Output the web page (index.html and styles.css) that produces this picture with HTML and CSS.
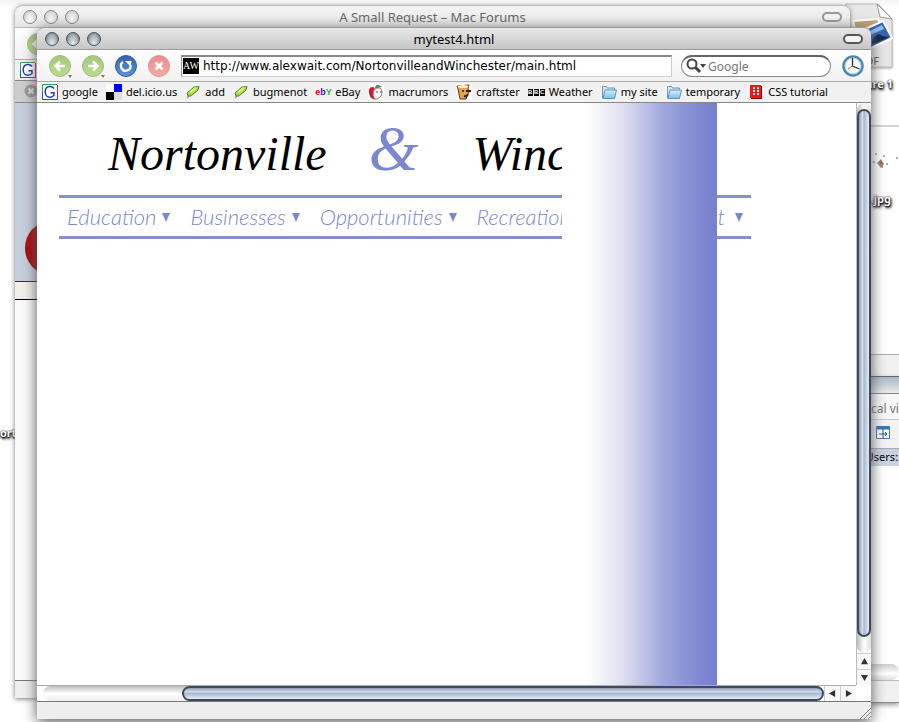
FILE: index.html
```html
<!DOCTYPE html>
<html lang="en">
<head>
    <meta charset="utf-8">
    <title>mytest4.html</title>
    <link rel="stylesheet" href="styles.css">
</head>
<body>
    <!-- shared icon shapes -->
    <svg class="defs" aria-hidden="true">
        <defs>
            <linearGradient id="green" x1="0" y1="0" x2="0" y2="1">
                <stop offset="0" stop-color="#a5c87f"/><stop offset="1" stop-color="#bddc8c"/>
            </linearGradient>
            <linearGradient id="blue" x1="0" y1="0" x2="0" y2="1">
                <stop offset="0" stop-color="#3462ac"/><stop offset="1" stop-color="#5d93e0"/>
            </linearGradient>
            <linearGradient id="red" x1="0" y1="0" x2="0" y2="1">
                <stop offset="0" stop-color="#e88d8d"/><stop offset="1" stop-color="#f6aaa4"/>
            </linearGradient>
            <linearGradient id="sky" x1="0" y1="0" x2="0" y2="1">
                <stop offset="0" stop-color="#d8efff"/><stop offset="1" stop-color="#7dbbe9"/>
            </linearGradient>
        </defs>
        <symbol id="arrow" viewBox="0 0 22 22">
            <circle cx="11" cy="11" r="10.5" fill="url(#green)" stroke="#9dbd78"/>
            <path d="M16 11H7M11 6.500L6.500 11l4.500 4.500" fill="none" stroke="#fff" stroke-width="2.500"/>
        </symbol>
        <symbol id="google" viewBox="0 0 16 16">
            <path d="M0 0h16v16H0z" fill="#fff"/>
            <path d="M.5 15V.5H15" fill="none" stroke="#2f9d46"/>
            <path d="M15.500 1v15" stroke="#d22"/>
            <path d="M0 15.500h15M.5 8v8" fill="none" stroke="#2a50c8"/>
            <path d="M12 4.500C10.500 2.500 8.500 2.300 7 2.600 4.500 3 3.200 5.500 3.200 8c0 3 1.800 5.300 4.600 5.300 1.800 0 3-.8 4.200-1.800V8.700H8.500" fill="none" stroke="#1b3fae" stroke-width="1.500"/>
        </symbol>
        <symbol id="marker" viewBox="0 0 16 16">
            <path d="M2 9l7-6 5-.5L13 6l-7 6H3z" fill="#a4dc45" stroke="#5b8428"/>
            <path d="M5 8.500l6-5" stroke="#d8f47e" stroke-width="2"/>
            <path d="M3 10l2 2-3 3z" fill="#78903a"/>
        </symbol>
        <symbol id="folder" viewBox="0 0 16 16">
            <path d="M1.500 14V2.500h4l1 1.500h7V14z" fill="#d5e5f2" stroke="#7095b3"/>
            <path d="M2 14.500L4 6h11.500l-2 8.500z" fill="url(#sky)" stroke="#5c92bd"/>
        </symbol>
    </svg>

    <main class="desktop">
        <!-- files on the desktop -->
        <div class="file file-pdf">
            <svg width="48" height="66" viewBox="0 0 48 66">
                <path d="M1 1h32l14 15v48H1z" fill="#e6e6e6" stroke="#bbb"/>
                <path d="M32 1l15 15-12-2z" fill="#fafafa" stroke="#999"/>
                <path d="M8 18l25-2 8 18-28 6z" fill="#c3a178" stroke="#fff" stroke-width="2"/>
                <path d="M18 27l20-9 9 17-23 11z" fill="#3865b4" stroke="#fff" stroke-width="2"/>
                <path d="M27 37q6-9 10-4l7 1-17 8z" fill="#192a46"/>
                <path d="M23 29l14-7 2 4-14 6z" fill="#8cbaf3"/>
            </svg>
            <span class="kind">PDF</span>
            <span class="label">Picture 1</span>
        </div>
        <div class="file file-jpg">
            <svg width="30" height="62" viewBox="0 0 30 62">
                <path d="M2 1h28" stroke="#aaa"/>
                <g fill="#98948c">
                    <circle cx="7" cy="29" r="1"/><circle cx="15" cy="31" r="1"/><circle cx="5" cy="37" r="1"/>
                    <circle cx="18" cy="39" r="1"/><circle cx="13" cy="42" r="1"/><circle cx="28" cy="33" r="1"/>
                </g>
                <path d="M8 38l4-4 3 5-3 4z" fill="#8f8b6d"/><path d="M11 36l2 2-2 2z" fill="#c35b1a"/>
            </svg>
            <span class="label">.jpg</span>
        </div>
        <span class="label label-left">ort</span>

        <section class="sliver sliver-top"></section>
        <section class="sliver sliver-finder">
            <div class="finder-title"></div>
            <div class="finder-head">cal vi</div>
            <div class="finder-tools">
                <svg width="14" height="13" viewBox="0 0 14 13">
                    <path d="M.5.5h13v12H.5z" fill="#fff" stroke="#4478b5"/><path d="M1 2h12" stroke="#3472c4" stroke-width="3"/>
                    <path d="M7 3v9M3 8h8M9 6l2 2-2 2" fill="none" stroke="#275b79"/>
                </svg>
            </div>
            <div class="finder-path">Users:</div>
            <div class="finder-body"></div>
            <div class="finder-scroll"></div>
            <div class="finder-status"></div>
        </section>

        <!-- window at the back -->
        <section class="window window-back">
            <header class="titlebar">
                <span class="lights"><i></i><i></i><i></i></span>
                <h2>A Small Request – Mac Forums</h2>
                <i class="pill"></i>
            </header>
            <div class="toolbar"><svg class="round"><use href="#arrow"/></svg></div>
            <div class="bookmarks"><svg class="icon"><use href="#google"/></svg></div>
            <div class="tabs">
                <svg width="14" height="14" viewBox="0 0 14 14"><circle cx="7" cy="7" r="6.500" fill="#999"/><path d="M4.500 4.500l5 5m0-5l-5 5" stroke="#ddd" stroke-width="2"/></svg>
            </div>
            <div class="forum-banner">
                <svg width="60" height="60" viewBox="0 0 60 60"><ellipse cx="24" cy="26" rx="24" ry="26" fill="#a30f12"/></svg>
            </div>
            <div class="forum-strip"></div>
            <div class="forum-body"></div>
            <footer class="status"></footer>
        </section>

        <!-- front browser window -->
        <section class="window window-front">
            <header class="titlebar">
                <span class="lights"><i></i><i></i><i></i></span>
                <h1>mytest4.html</h1>
                <i class="pill"></i>
            </header>

            <form class="toolbar">
                <button type="button" class="tool more" aria-label="Back"><svg class="round"><use href="#arrow"/></svg></button>
                <button type="button" class="tool more forward" aria-label="Forward"><svg class="round"><use href="#arrow"/></svg></button>
                <button type="button" class="tool" aria-label="Reload">
                    <svg class="round" viewBox="0 0 22 22">
                        <circle cx="11" cy="11" r="10.500" fill="url(#blue)" stroke="#345d9f"/>
                        <path d="M8 7a4.800 4.800 0 1 0 7.500 3" fill="none" stroke="#fff" stroke-width="2.300"/>
                        <path d="M10 6h6.500l-1 5.500z" fill="#fff"/>
                    </svg>
                </button>
                <button type="button" class="tool" aria-label="Stop">
                    <svg class="round" viewBox="0 0 22 22">
                        <circle cx="11" cy="11" r="10.500" fill="url(#red)" stroke="#e29594"/>
                        <path d="M7.500 7.500l7 7m0-7l-7 7" stroke="#fff" stroke-width="2.800"/>
                    </svg>
                </button>
                <label class="address">
                    <span class="favicon">AW</span>
                    <input type="text" aria-label="Address" value="http://www.alexwait.com/NortonvilleandWinchester/main.html">
                </label>
                <label class="search">
                    <svg width="20" height="16" viewBox="0 0 20 16">
                        <circle cx="6" cy="6" r="4.500" fill="none" stroke="#444" stroke-width="2"/>
                        <path d="M9 9l5 5" stroke="#444" stroke-width="3"/><path d="M14 6h6l-3 4z" fill="#444"/>
                    </svg>
                    <input type="text" aria-label="Search" placeholder="Google">
                </label>
                <button type="button" class="tool" aria-label="History">
                    <svg class="round" viewBox="0 0 22 22">
                        <circle cx="11" cy="11" r="9.500" fill="#f5f9fd" stroke="#4d87b5" stroke-width="2.500"/>
                        <circle cx="11" cy="11" r="8" fill="none" stroke="#a9cbe5"/>
                        <path d="M10.500 3v8l7 3" fill="none" stroke="#333" stroke-width="1.300"/><path d="M10.500 11L6 14" stroke="#c66"/>
                    </svg>
                </button>
            </form>

            <nav class="bookmarks">
                <a href="#"><svg class="icon"><use href="#google"/></svg>google</a>
                <a href="#"><svg class="icon" viewBox="0 0 16 16"><path d="M0 0h8v8H0z" fill="#fff"/><path d="M8 0h8v8H8z" fill="#00f"/><path d="M0 8h8v8H0z"/><path d="M8 8h8v8H8z" fill="#ddd"/></svg>del.icio.us</a>
                <a href="#"><svg class="icon"><use href="#marker"/></svg>add</a>
                <a href="#"><svg class="icon"><use href="#marker"/></svg>bugmenot</a>
                <a href="#"><span class="ebay"><b>e</b><b>b</b><b>Y</b></span>eBay</a>
                <a href="#">
                    <svg class="icon" viewBox="0 0 16 16">
                        <path d="M0 0h16v16H0z" fill="#fff"/>
                        <path d="M7 4C3 1 0 5 1 9c1 5 3 7 7 6-3-3-4-7-1-11z" fill="#c91e29"/>
                        <path d="M7 5c4-2 7-1 7 3s-3 7-6 7-4-6-1-10z" fill="#fff" stroke="#b66"/>
                        <path d="M7 4q1-4 4-3l3 2-4 1z" fill="#538d67"/><path d="M8 8h2m2 0h2" stroke="#555"/>
                    </svg>macrumors</a>
                <a href="#">
                    <svg class="icon" viewBox="0 0 16 16">
                        <path d="M0 0h16v16H0z" fill="#fff"/>
                        <path d="M1 2l12-1-1 4 1 3-2 4-1 3H4L2 5z" fill="#eda04c" stroke="#5b3211"/>
                        <ellipse cx="7" cy="2.500" rx="5.500" ry="1.500" fill="#fff0c8"/>
                        <circle cx="7" cy="7" r="1" fill="#222"/><path d="M10 7h5M8 12q3 1 4-2" fill="none" stroke="#222" stroke-width="2"/>
                    </svg>craftster</a>
                <a href="#"><span class="bbc"><b>B</b><b>B</b><b>C</b></span>Weather</a>
                <a href="#"><svg class="icon"><use href="#folder"/></svg>my site</a>
                <a href="#"><svg class="icon"><use href="#folder"/></svg>temporary</a>
                <a href="#">
                    <svg class="icon" viewBox="0 0 16 16">
                        <path d="M3 2h11v13H3z" fill="#900"/><path d="M2 1h11v13H2z" fill="#f11"/>
                        <path d="M5 3h2v2H5zm4 0h2v2H9zM5 6h2v2H5zm4 0h2v2H9zM5 9h2v2H5zm4 0h2v2H9z" fill="#fff"/>
                    </svg>CSS tutorial</a>
            </nav>

            <div class="viewport">
                <article class="page">
                    <p class="banner"><span>Nortonville</span> <span class="amp">&amp;</span> <span>Winchester</span></p>
                    <nav class="menu">
                        <a href="#">Education</a>
                        <a href="#">Businesses</a>
                        <a href="#">Opportunities</a>
                        <a href="#">Recreation</a>
                        <a href="#" class="last">Contact</a>
                    </nav>
                    <div class="fade"></div>
                </article>
                <div class="scroll-v">
                    <div class="track"><div class="thumb"></div></div>
                    <button type="button" aria-label="Scroll up"><svg viewBox="0 0 8 8"><path d="M0 7l4-7 4 7z"/></svg></button>
                    <button type="button" aria-label="Scroll down"><svg viewBox="0 0 8 8"><path d="M0 1l4 7 4-7z"/></svg></button>
                </div>
                <div class="scroll-h">
                    <div class="track"><div class="thumb"></div></div>
                    <button type="button" aria-label="Scroll left"><svg viewBox="0 0 8 8"><path d="M7 0L0 4l7 4z"/></svg></button>
                    <button type="button" aria-label="Scroll right"><svg viewBox="0 0 8 8"><path d="M1 0l7 4-7 4z"/></svg></button>
                </div>
            </div>
            <footer class="status">
                <svg width="12" height="12" viewBox="0 0 12 12"><path d="M1 12L12 1M5 12l7-7M9 12l3-3" stroke="#777"/></svg>
            </footer>
        </section>
    </main>
</body>
</html>
```
FILE: styles.css
```css
* {
    box-sizing: border-box;
}

body {
    margin: 0;
    font-family: "Noto Sans", "Open Sans", sans-serif;
    font-size: 11px;
    color: #000;
}

a {
    color: inherit;
    text-decoration: none;
}

button,
input {
    border: none;
    padding: 0;
    background: none;
    font: inherit;
}

svg {
    flex: none;
}

.defs {
    position: absolute;
    width: 0;
    height: 0;
}

.desktop {
    position: relative;
    height: 100vh;
    overflow: hidden;
    background: linear-gradient(#f4f4f4, #fff 8px);
}

/* desktop files */
.file {
    position: absolute;
    display: flex;
    flex-direction: column;
    align-items: flex-end;
}

.file-pdf {
    top: 3px;
    right: 6px;
    gap: 3px;
}

.file-pdf svg {
    filter: drop-shadow(0 1px 1px #aaa);
}

.kind {
    position: absolute;
    top: 50px;
    right: 14px;
    color: #555;
}

.file-jpg {
    top: 125px;
    right: 0;
}

.label {
    padding: 4px 0;
    color: #fff;
    font-weight: bold;
    line-height: 16px;
    text-shadow: 0 1px 2px #000, 0 0 2px #000, 1px 2px 3px #000;
}

.file-jpg .label {
    padding-right: 8px;
}

.label-left {
    position: absolute;
    top: 421px;
    left: 0;
}

/* windows peeking out on the right */
.sliver {
    position: absolute;
    right: 0;
    width: 60px;
}

.sliver-top {
    top: 354px;
    height: 23px;
    background: #f0f0f0;
    border-top: 1px solid #aaa;
}

.sliver-finder {
    top: 376px;
    bottom: 19px;
    display: flex;
    flex-direction: column;
    background: #fff;
    border-top: 1px solid #666;
    border-bottom: 1px solid #888;
    box-shadow: 0 2px 5px #999;
}

.finder-title {
    height: 17px;
    background: linear-gradient(#aab6c3, #e6eaee);
    border-bottom: 1px solid #888;
}

.finder-head {
    height: 26px;
    padding: 6px 0 0 32px;
    background: #f6f6f6;
    border-bottom: 1px solid #ccc;
    color: #777;
    font-size: 12px;
    line-height: 18px;
    white-space: nowrap;
}

.finder-tools {
    height: 28px;
    padding: 6px 0 0 37px;
    background: #f2f2f2;
}

.finder-path {
    height: 18px;
    padding-right: 1px;
    background: #cad2e2;
    border-top: 1px solid #aaa;
    line-height: 16px;
    text-align: right;
}

.finder-body {
    flex: 1;
}

.finder-scroll {
    height: 16px;
    background: linear-gradient(#ccc, #fff 60%, #ddd);
    border-radius: 8px;
}

.finder-status {
    height: 22px;
    background: #f0f0f0;
    border-top: 1px solid #bbb;
}

/* browser windows */
.window {
    position: absolute;
    display: flex;
    flex-direction: column;
    border-radius: 8px 8px 0 0;
    background: #fff;
}

.window-back {
    top: 5px;
    left: 15px;
    right: 49px;
    bottom: 24px;
    box-shadow: 0 1px 5px #777;
}

.window-front {
    top: 27px;
    left: 37px;
    right: 28px;
    bottom: 3px;
    box-shadow: 0 3px 14px #555;
}

.titlebar {
    display: grid;
    grid-template-columns: 80px 1fr 80px;
    align-items: center;
    height: 23px;
    padding: 0 8px;
    border-top: 1px solid #999;
    border-bottom: 1px solid #999;
    border-radius: 8px 8px 0 0;
    background: linear-gradient(#e8e8e8, #c6c6c6);
}

.window-back .titlebar {
    border-color: #bbb;
    background: linear-gradient(#f4f4f4, #e6e6e6);
}

.titlebar h1,
.titlebar h2 {
    margin: 0;
    font-size: 13px;
    font-weight: normal;
    line-height: 20px;
    text-align: center;
}

.titlebar h2 {
    color: #666;
}

.lights {
    display: flex;
    gap: 7px;
}

.lights i {
    width: 14px;
    height: 14px;
    border: 1px solid #4c535b;
    border-radius: 50%;
    background: radial-gradient(ellipse at 50% 90%, #e8eef3, #a7b0b9 55%, #596068);
}

.window-back .lights i {
    border-color: #888;
    background: radial-gradient(ellipse at 50% 80%, #fff, #ddd 60%, #bbb);
}

.pill {
    justify-self: end;
    width: 20px;
    height: 10px;
    border: 2px solid #555;
    border-radius: 5px;
    background: #f4f4f4;
}

.window-back .pill {
    border-color: #999;
}

.toolbar {
    display: flex;
    align-items: center;
    gap: 11px;
    height: 31px;
    padding: 0 7px 0 12px;
    background: linear-gradient(#fff, #f1f1f1);
}

.tool {
    position: relative;
    width: 22px;
    height: 22px;
}

.round {
    display: block;
    width: 22px;
    height: 22px;
}

.forward .round {
    transform: scaleX(-1);
}

.more::after {
    content: "";
    position: absolute;
    right: -1px;
    bottom: -1px;
    border: 2px solid transparent;
    border-top: 3px solid #777;
    border-bottom: none;
}

.address {
    flex: 1;
    display: flex;
    align-items: center;
    gap: 4px;
    height: 22px;
    padding-left: 1px;
    border: 1px solid #ccc;
    border-top: 2px solid #888;
    border-left-color: #999;
    background: #fff;
}

.favicon {
    width: 16px;
    height: 16px;
    background: #000;
    color: #fff;
    font: 10px/16px "Liberation Serif", serif;
    text-align: center;
}

.address input {
    flex: 1;
    min-width: 0;
    font-family: "DejaVu Sans", sans-serif;
    font-size: 12px;
}

.search {
    display: flex;
    align-items: center;
    gap: 2px;
    width: 150px;
    height: 22px;
    margin-left: -2px;
    padding: 0 4px;
    border: 1px solid #888;
    border-top: 2px solid #666;
    border-radius: 11px;
    background: #fff;
}

.search input {
    width: 100px;
    font-size: 12px;
}

.search input::placeholder {
    color: #777;
}

.bookmarks {
    display: flex;
    align-items: center;
    gap: 8px;
    height: 22px;
    padding-left: 5px;
    border-top: 1px solid #aaa;
    border-bottom: 1px solid #888;
    background: #f1f1f1;
    line-height: 16px;
    white-space: nowrap;
}

.bookmarks a {
    display: flex;
    align-items: center;
    gap: 4px;
}

.icon {
    width: 16px;
    height: 16px;
}

.ebay {
    width: 16px;
    color: #d00;
    font: 9px/16px "Liberation Sans", sans-serif;
}

.ebay b:nth-child(2) {
    color: #22c;
}

.ebay b:nth-child(3) {
    color: #5a0;
}

.bbc {
    display: flex;
    gap: 1px;
    color: #fff;
    font: 6px/7px "Liberation Sans", sans-serif;
}

.bbc b {
    width: 5px;
    background: #000;
    text-align: center;
}

/* page inside the front window */
.viewport {
    flex: 1;
    min-height: 0;
    display: grid;
    grid-template-columns: 1fr 15px;
    grid-template-rows: 1fr 16px;
}

.page {
    position: relative;
    min-width: 0;
    overflow: hidden;
    background: #fff;
}

.banner {
    display: flex;
    align-items: baseline;
    gap: 42px;
    height: 92px;
    margin: 0;
    padding-left: 71px;
    font: italic 48px/92px "Liberation Serif", serif;
}

.amp {
    margin-right: 12px;
    color: #7c87d1;
    font-size: 64px;
}

.menu {
    display: flex;
    align-items: center;
    gap: 20px;
    width: 692px;
    max-width: 90%;
    height: 44px;
    margin-left: 22px;
    padding: 0 8px;
    border-top: 3px solid #8790cf;
    border-bottom: 3px solid #8790cf;
    color: #7c87d1;
    font: italic 300 22px/38px Lato, sans-serif;
}

.menu a {
    display: flex;
    align-items: center;
    gap: 6px;
}

.menu a::after {
    content: "";
    border: 4px solid transparent;
    border-top: 9px solid #7c87d1;
    border-bottom: none;
}

.menu .last {
    margin-left: auto;
    gap: 10px;
}

.fade {
    position: absolute;
    top: 0;
    bottom: 0;
    left: 525px;
    width: 155px;
    background: linear-gradient(to right, #fff 15%, #e2e2f3 38%, #a4aadf 64%, #8088d1 88%, #7580cf);
}

.scroll-v,
.scroll-h {
    display: flex;
    background: #fff;
}

.scroll-v {
    flex-direction: column;
    border-left: 1px solid #bbb;
}

.scroll-h {
    border-top: 1px solid #aaa;
}

.track {
    flex: 1;
    border-radius: 8px;
}

.scroll-v .track {
    padding: 6px 0 16px;
    background: linear-gradient(to right, #bbb, #fff 50%, #ddd);
}

.scroll-h .track {
    margin-left: 6px;
    padding-left: 139px;
    background: linear-gradient(#bbb, #fff 50%, #eee);
}

.thumb {
    height: 100%;
    border: 2px solid #3c4b60;
    border-radius: 8px;
}

.scroll-v .thumb {
    background: linear-gradient(to right, #8b9bb1, #d3deeb 35%, #a6b9d0 50%, #e4edf6);
}

.scroll-h .thumb {
    background: linear-gradient(#8b9bb1, #d3deeb 35%, #a6b9d0 50%, #e4edf6);
}

.scroll-v button,
.scroll-h button {
    display: grid;
    place-items: center;
    width: 16px;
    height: 16px;
    border: 0 solid #ccc;
    background: #f8f8f8;
}

.scroll-v button {
    width: 100%;
    border-top-width: 1px;
}

.scroll-h button {
    height: 100%;
    border-left-width: 1px;
}

.scroll-v button svg,
.scroll-h button svg {
    width: 7px;
    height: 7px;
    fill: #333;
}

.status {
    display: flex;
    align-items: flex-end;
    justify-content: flex-end;
    height: 18px;
    border-top: 1px solid #777;
    background: #eee;
}

/* forum page in the back window */
.tabs {
    height: 22px;
    padding: 3px 0 0 9px;
    border-bottom: 1px solid #888;
    background: #ccc;
}

.forum-banner {
    height: 178px;
    padding: 119px 0 0 10px;
    background: #c5cedb;
}

.forum-strip {
    height: 19px;
    border-top: 1px solid #333;
    border-bottom: 1px solid #000;
    background: linear-gradient(to right, #f2eee9, #ddd5cb);
}

.forum-body {
    flex: 1;
    background: #fafafa;
}
```
